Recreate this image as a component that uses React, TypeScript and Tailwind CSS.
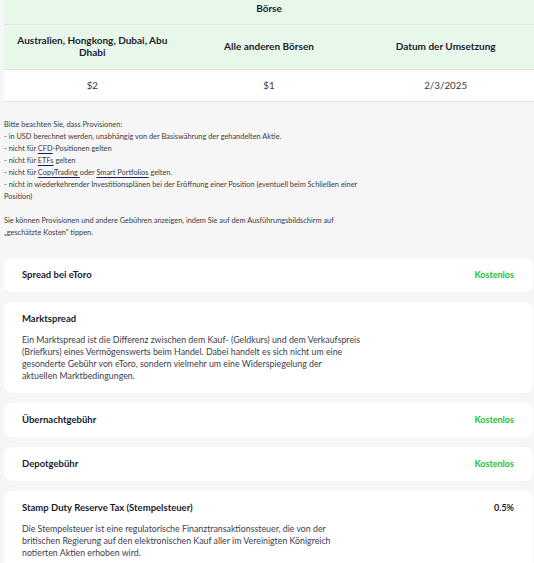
import React from "react";

const dark = "text-[#1b1b2e]";

function Card({ title, value, children }: { title: string; value?: string; children?: React.ReactNode }) {
  return (
    <div className="mr-px rounded-[8px] bg-white px-[18px] pt-[9px] pb-[9px]">
      <div className="flex h-[16px] items-center justify-between">
        <span className={`text-[9.5px] font-bold ${dark}`}>{title}</span>
        {value && (
          <span className={`pr-px text-[9px] font-bold ${value === "0.5%" ? dark : "text-[#13c636]"}`}>{value}</span>
        )}
      </div>
      {children && (
        <p className="mt-[7px] mb-[2px] whitespace-nowrap text-[8.8px] leading-[12px] text-[#3d3d4e]">{children}</p>
      )}
    </div>
  );
}

const U = ({ children }: { children: React.ReactNode }) => (
  <span className="underline decoration-[#1b1b5e] underline-offset-[1.5px]">{children}</span>
);

export default function App() {
  return (
    <div className="min-h-screen bg-[#f6f6f6] pl-1 pb-6" style={{ fontFamily: "Lato, 'Noto Sans', sans-serif" }}>
      <div className="w-[530px] text-[10px]">
        <div className={`flex h-[25px] items-start justify-center border-b border-[#e2e4e3] bg-[#e7f8eb] pt-[1px] font-bold ${dark}`}>
          Börse
        </div>
        <div className={`grid h-[45px] grid-cols-3 items-center border-b border-[#e2e4e3] bg-[#e7f8eb] pb-[2px] text-center font-bold leading-[12.5px] ${dark}`}>
          <div className="px-1">Australien, Hongkong, Dubai, Abu Dhabi</div>
          <div>Alle anderen Börsen</div>
          <div>Datum der Umsetzung</div>
        </div>
        <div className="grid h-[32px] grid-cols-3 items-center border-b border-[#e2e4e3] bg-white text-center text-[9.8px] text-[#3a3a4a]">
          <div>$2</div>
          <div>$1</div>
          <div>2/3/2025</div>
        </div>
      </div>

      <div className="mt-[17px] text-[7.4px] leading-[12px] text-[#3a3a42]">
        <p>Bitte beachten Sie, dass Provisionen:</p>
        <p>- in USD berechnet werden, unabhängig von der Basiswährung der gehandelten Aktie.</p>
        <p>
          - nicht für <U>CFD</U>-Positionen gelten
        </p>
        <p>
          - nicht für <U>ETFs</U> gelten
        </p>
        <p>
          - nicht für <U>CopyTrading </U>oder <U>Smart Portfolios</U> gelten.
        </p>
        <p>
          - nicht in wiederkehrender Investitionsplänen bei der Eröffnung einer Position (eventuell beim Schließen einer
          <br />
          Position)
        </p>
        <p className="mt-[12px]">
          Sie können Provisionen und andere Gebühren anzeigen, indem Sie auf dem Ausführungsbildschirm auf
          <br />
          „geschätzte Kosten” tippen.
        </p>
      </div>

      <div className="mt-[19px] flex flex-col gap-[10px]">
        <Card title="Spread bei eToro" value="Kostenlos" />
        <Card title="Marktspread">
          Ein Marktspread ist die Differenz zwischen dem Kauf- (Geldkurs) und dem Verkaufspreis
          <br />
          (Briefkurs) eines Vermögenswerts beim Handel. Dabei handelt es sich nicht um eine
          <br />
          gesonderte Gebühr von eToro, sondern vielmehr um eine Widerspiegelung der
          <br />
          aktuellen Marktbedingungen.
        </Card>
        <Card title="Übernachtgebühr" value="Kostenlos" />
        <Card title="Depotgebühr" value="Kostenlos" />
        <Card title="Stamp Duty Reserve Tax (Stempelsteuer)" value="0.5%">
          Die Stempelsteuer ist eine regulatorische Finanztransaktionssteuer, die von der
          <br />
          britischen Regierung auf den elektronischen Kauf aller im Vereinigten Königreich
          <br />
          notierten Aktien erhoben wird.
        </Card>
      </div>
    </div>
  );
}
